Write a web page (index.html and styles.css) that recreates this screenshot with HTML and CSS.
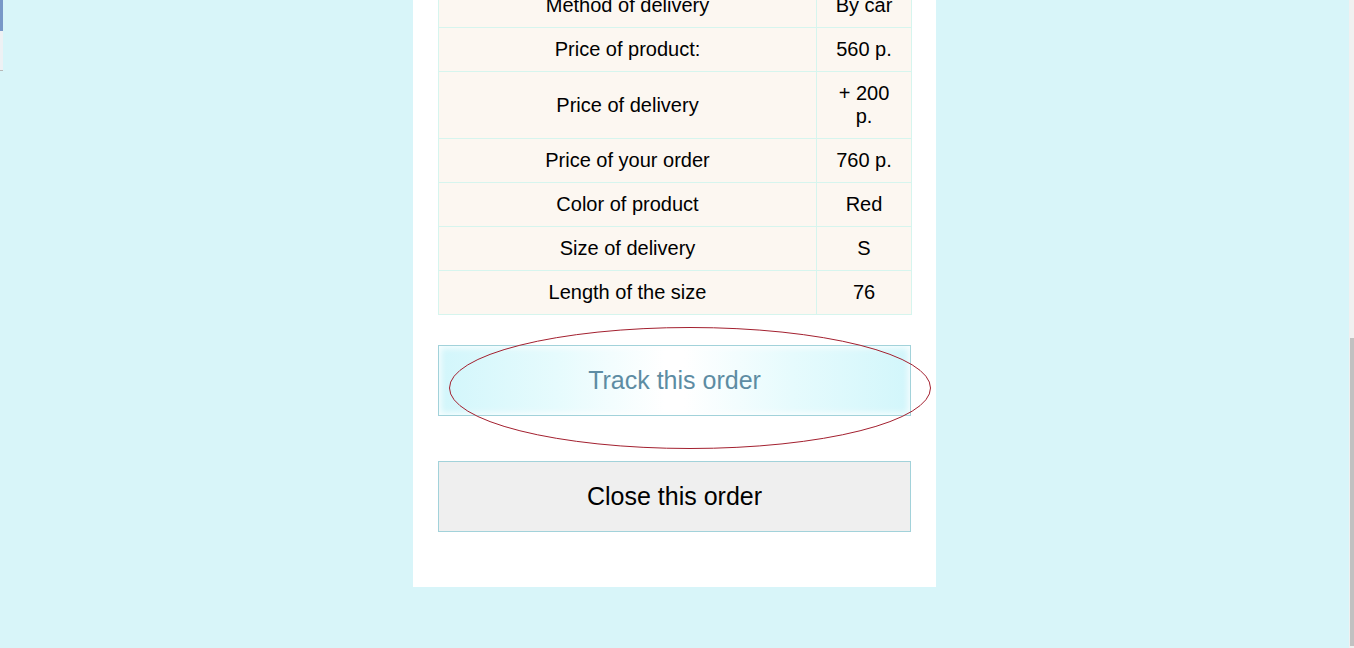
FILE: index.html
```html
<!DOCTYPE html>
<html>
<head>
<meta charset="utf-8">
<link rel="stylesheet" href="styles.css">
</head>
<body>
<div class="page">
  <div class="panel">
    <table class="info">
      <colgroup><col class="c1"><col class="c2"></colgroup>
      <tr><td>Method of delivery</td><td>By car</td></tr>
      <tr><td>Price of product:</td><td>560 p.</td></tr>
      <tr><td>Price of delivery</td><td>+ 200 p.</td></tr>
      <tr><td>Price of your order</td><td>760 p.</td></tr>
      <tr><td>Color of product</td><td>Red</td></tr>
      <tr><td>Size of delivery</td><td>S</td></tr>
      <tr><td>Length of the size</td><td>76</td></tr>
    </table>
    <div class="track-wrap">
      <button class="btn track">Track this order</button>
      <svg class="ring" width="484" height="124" viewBox="0 0 484 124"><ellipse cx="242" cy="62" rx="240.5" ry="60.5" fill="none" stroke="#a3202f" stroke-width="1"/></svg>
    </div>
    <button class="btn close">Close this order</button>
  </div>
</div>
<div class="left-tab"><div class="left-blue"></div><div class="left-gray"></div></div>
<div class="scrollbar"><div class="thumb"></div></div>
</body>
</html>
```
FILE: styles.css
```css
html, body {
  margin: 0;
  padding: 0;
  height: 100%;
  overflow: hidden;
}
body {
  background: #d8f5f9;
  font-family: "Liberation Sans", Arial, sans-serif;
  color: #000;
}
.page {
  width: 1349px;
  display: flex;
  justify-content: center;
}
.panel {
  width: 473px;
  background: #fff;
  padding: 0 25px 55px;
  margin-top: -17px;
  display: flex;
  flex-direction: column;
}
.info {
  width: 473px;
  border-collapse: collapse;
  table-layout: fixed;
  font-size: 20px;
  line-height: 23px;
}
.c1 { width: 378px; }
.c2 { width: 95px; }
.info td {
  background: #fcf7f1;
  border: 1px solid #d6f5ee;
  padding: 10px 15px;
  text-align: center;
  height: 23px;
}
.track-wrap {
  position: relative;
  margin-top: 30px;
}
.btn {
  display: block;
  width: 473px;
  height: 71px;
  box-sizing: border-box;
  border: 1px solid #a2d2da;
  font-family: "Liberation Sans", Arial, sans-serif;
  font-size: 25px;
  padding: 0;
  margin: 0;
}
.track {
  color: #5d8ca3;
  background: linear-gradient(to right, #d2f6fb 0%, #e6fbfd 25%, #ffffff 48%, #ffffff 52%, #e6fbfd 75%, #d2f6fb 100%);
  box-shadow: inset 0 0 6px 2px rgba(255,255,255,0.85);
}
.ring {
  position: absolute;
  left: 10px;
  top: -19px;
  pointer-events: none;
}
.close {
  margin-top: 45px;
  background: #efefef;
  color: #000;
}
.left-tab {
  position: fixed;
  left: 0;
  top: 0;
  width: 3px;
}
.left-blue {
  height: 31px;
  background: #7898c8;
}
.left-gray {
  height: 39px;
  background: #eef1f4;
  border-bottom: 1px solid #b8b8b8;
}
.scrollbar {
  position: fixed;
  right: 0;
  top: 0;
  width: 5px;
  height: 648px;
  background: #f0f0f0;
}
.thumb {
  position: absolute;
  left: 1px;
  right: 0;
  top: 338px;
  height: 308px;
  background: #c1c1c1;
}
```
